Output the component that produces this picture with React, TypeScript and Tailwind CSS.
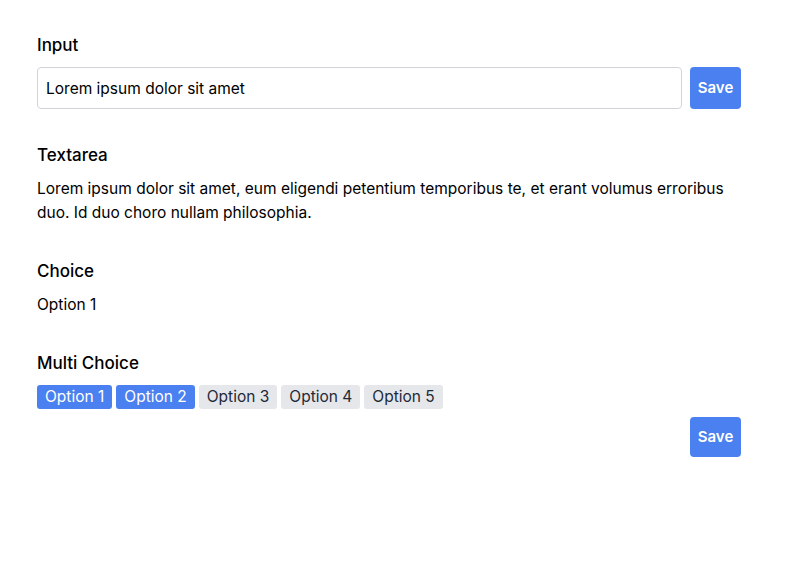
import React, { useState } from 'react';

const OPTIONS = ['Option 1', 'Option 2', 'Option 3', 'Option 4', 'Option 5'];

const Label: React.FC<{ children: React.ReactNode }> = ({ children }) => (
  <div className="text-[17px] leading-6 font-medium text-black mb-2.5">{children}</div>
);

export default function App() {
  const [value, setValue] = useState('Lorem ipsum dolor sit amet');
  const [selected, setSelected] = useState<string[]>(['Option 1', 'Option 2']);

  const toggle = (o: string) =>
    setSelected((s) => (s.includes(o) ? s.filter((x) => x !== o) : [...s, o]));

  return (
    <div className="min-h-screen bg-white font-['Inter',sans-serif] text-black">
      <div className="w-[704px] ml-[37px] pt-[33px] flex flex-col gap-[34px]">
        {/* Input */}
        <div>
          <Label>Input</Label>
          <div className="flex gap-2">
            <input
              value={value}
              onChange={(e) => setValue(e.target.value)}
              className="flex-1 h-[42px] px-2 rounded border border-[#d1d5db] text-[15.5px] outline-none"
            />
            <button className="w-[51px] h-[42px] rounded bg-[#4a80f0] text-white text-[15px] font-semibold">
              Save
            </button>
          </div>
        </div>

        {/* Textarea */}
        <div>
          <Label>Textarea</Label>
          <p className="text-[15.5px] leading-6">
            Lorem ipsum dolor sit amet, eum eligendi petentium temporibus te, et erant volumus erroribus duo. Id duo
            choro nullam philosophia.
          </p>
        </div>

        {/* Choice */}
        <div>
          <Label>Choice</Label>
          <div className="text-[15.5px] leading-6">Option 1</div>
        </div>

        {/* Multi choice */}
        <div>
          <Label>Multi Choice</Label>
          <div className="flex gap-1">
            {OPTIONS.map((o) => {
              const on = selected.includes(o);
              return (
                <button
                  key={o}
                  onClick={() => toggle(o)}
                  className={`h-6 px-2 rounded-[3px] text-[15.5px] leading-6 ${
                    on ? 'bg-[#4a80f0] text-white' : 'bg-[#e5e7eb] text-[#1f2937]'
                  }`}
                >
                  {o}
                </button>
              );
            })}
          </div>
          <div className="flex justify-end mt-2">
            <button className="w-[51px] h-10 rounded bg-[#4a80f0] text-white text-[15px] font-semibold">
              Save
            </button>
          </div>
        </div>
      </div>
    </div>
  );
}
